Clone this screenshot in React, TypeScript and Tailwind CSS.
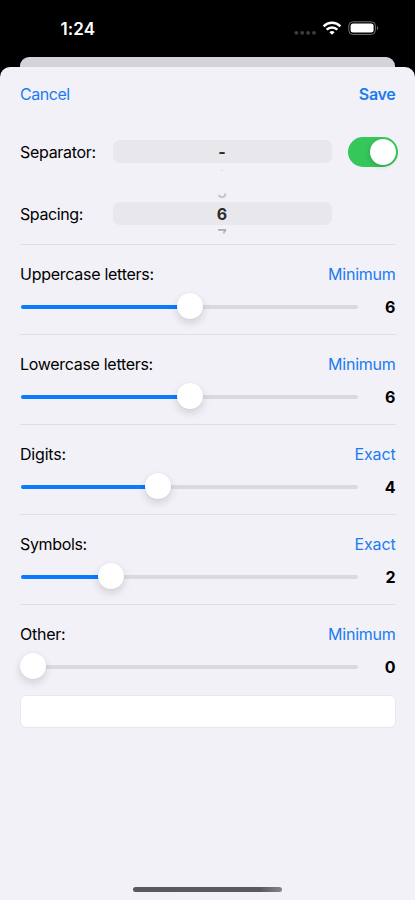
import React from "react";

type Section = {
  label: string;
  labelClass: string;
  mode: string;
  modeClass: string;
  value: number;
  knob: number;
};

const sections: Section[] = [
  { label: "Uppercase letters:", labelClass: "tracking-[-0.27px]", mode: "Minimum", modeClass: "tracking-[-0.25px]", value: 6, knob: 169.5 },
  { label: "Lowercase letters:", labelClass: "tracking-[-0.3px]", mode: "Minimum", modeClass: "tracking-[-0.25px]", value: 6, knob: 169.5 },
  { label: "Digits:", labelClass: "tracking-[-0.2px]", mode: "Exact", modeClass: "tracking-[-0.15px]", value: 4, knob: 138 },
  { label: "Symbols:", labelClass: "tracking-[-0.35px]", mode: "Exact", modeClass: "tracking-[-0.15px]", value: 2, knob: 90.7 },
  { label: "Other:", labelClass: "tracking-[-0.25px]", mode: "Minimum", modeClass: "tracking-[-0.25px]", value: 0, knob: 12.7 },
];

function StatusBar() {
  return (
    <div className="flex h-[57px] shrink-0 justify-between pl-[60.5px] pr-[36px]">
      <span className="mt-[17px] text-[17px] font-semibold leading-6 tracking-[0.1px] text-white">1:24</span>
      <svg className="mt-[20px]" width="86" height="16" viewBox="0 0 86 16" fill="none">
        <g fill="#3e3e3e">
          <circle cx="3.3" cy="12.8" r="1.9" />
          <circle cx="9.2" cy="12.8" r="1.9" />
          <circle cx="15.1" cy="12.8" r="1.9" />
          <circle cx="21" cy="12.8" r="1.9" />
        </g>
        <g stroke="#fff" strokeWidth="2.5">
          <path d="M30.6 6.3a12 12 0 0 1 16.8 0" />
          <path d="M33.6 9.7a7.8 7.8 0 0 1 10.8 0" />
        </g>
        <path d="M39 14.8l-2.6-2.6a3.8 3.8 0 0 1 5.2 0z" fill="#fff" />
        <rect x="55.8" y="1.8" width="26.6" height="12.6" rx="4" stroke="#737373" strokeWidth="1" />
        <rect x="57.6" y="3.6" width="23" height="9" rx="2.5" fill="#fff" />
        <path d="M84 6.2c1.7.6 1.7 3.2 0 3.8z" fill="#737373" />
      </svg>
    </div>
  );
}

function Slider({ knob }: { knob: number }) {
  return (
    <div className="relative h-[4px] w-[337px] rounded-full bg-[#d9d9df]">
      <div className="h-full rounded-full bg-[#0a7aff]" style={{ width: knob }} />
      <div
        className="absolute -top-[12px] h-[26px] w-[26px] rounded-full bg-white shadow-[0_4px_9px_rgba(0,0,0,0.14),0_0_2px_rgba(0,0,0,0.06)]"
        style={{ left: knob - 14 }}
      />
    </div>
  );
}

export default function App() {
  return (
    <div className="flex h-[900px] w-[415px] flex-col overflow-hidden bg-black font-['Inter','Liberation_Sans',sans-serif] text-[16px] leading-5 text-black">
      <StatusBar />
      <div className="mx-[20px] h-[10px] shrink-0 rounded-t-[9px] bg-[#d4d3d9]" />
      <main className="flex flex-1 flex-col rounded-t-[10px] bg-[#f2f1f7] pl-[20px] pr-[19.5px]">
        <header className="mt-[17px] flex h-5 justify-between text-[#1a7cf0]">
          <button className="tracking-[-0.45px]">Cancel</button>
          <button className="font-semibold tracking-[-0.3px]">Save</button>
        </header>

        <div className="mt-[33px] flex h-[30px] items-center">
          <span className="w-[92.5px] shrink-0 tracking-[-0.3px]">Separator:</span>
          <div className="relative -mt-px flex h-[23px] w-[219px] shrink-0 items-center justify-center rounded-[7px] bg-[#e8e7ec] pt-px font-bold text-[#2b2b2e]">
            -
            <span className="absolute top-[30px] h-px w-[2px] bg-[#dcdbe0]" />
          </div>
          <div className="ml-[16.5px] flex h-[30px] w-[49.5px] shrink-0 items-center justify-end rounded-full bg-[#35c759] pr-[2px]">
            <div className="h-[26px] w-[26px] rounded-full bg-white shadow-[-1px_2px_4px_rgba(0,0,0,0.15)]" />
          </div>
        </div>

        <div className="mt-[32px] flex h-[30px] items-center">
          <span className="w-[92.5px] shrink-0 tracking-[-0.4px]">Spacing:</span>
          <div className="relative -mt-px flex h-[23px] w-[219px] shrink-0 items-center justify-center rounded-[7px] bg-[#e8e7ec] pt-px font-bold text-[#2b2b2e]">
            <span className="absolute -top-[20px] font-semibold leading-5 text-[#c0bfc5] [clip-path:inset(11px_0_0_0)] [mask-image:linear-gradient(to_bottom,transparent_8px,black_14px)]">
              5
            </span>
            6
            <span className="absolute top-[23px] font-semibold leading-5 text-[#adacb2] [clip-path:inset(0_0_11px_0)] [mask-image:linear-gradient(to_bottom,black_6px,transparent_11px)]">
              7
            </span>
          </div>
        </div>

        <div className="mt-[15px]">
          {sections.map((s) => (
            <section key={s.label} className="h-[90px] border-t border-[#e0dfe5]">
              <div className="flex pt-[19px]">
                <span className={"flex-1 " + s.labelClass}>{s.label}</span>
                <span className={"text-[#1a7cf0] " + s.modeClass}>{s.mode}</span>
              </div>
              <div className="ml-[1px] mt-[13px] flex h-5 items-center justify-between">
                <Slider knob={s.knob} />
                <span className="font-bold">{s.value}</span>
              </div>
            </section>
          ))}
        </div>
        <div className="mt-[0.5px] h-[33px] rounded-[6px] border border-[#e8e7ec] bg-white" />
        <div className="mb-[8px] mt-auto h-[5px] w-[149px] self-center rounded-full bg-gradient-to-r from-[#59595b] via-[#5a5a5c] via-85% to-[#87878a]" />
      </main>
    </div>
  );
}
